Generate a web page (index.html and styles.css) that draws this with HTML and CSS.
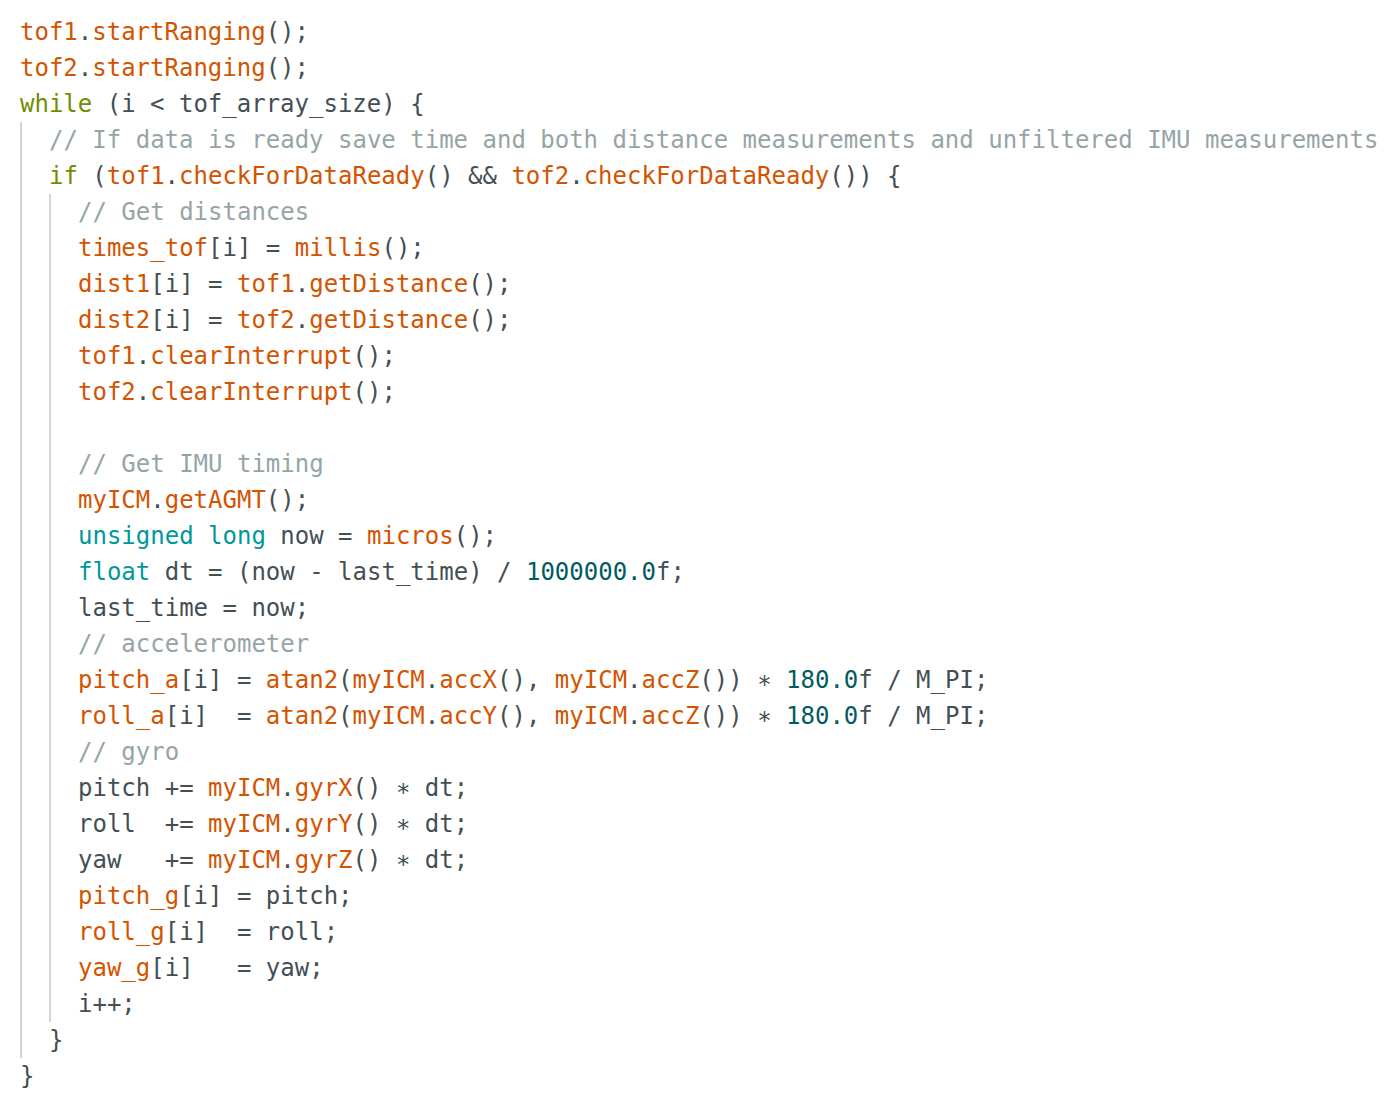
FILE: index.html
```html
<!DOCTYPE html>
<html>
<head>
<meta charset="utf-8">
<link rel="stylesheet" href="styles.css">
</head>
<body>
<div class="code">
<div class="ln"><span class="f">tof1</span>.<span class="f">startRanging</span>();</div>
<div class="ln"><span class="f">tof2</span>.<span class="f">startRanging</span>();</div>
<div class="ln"><span class="k">while</span> (i &lt; tof_array_size) {</div>
<div class="blk">
  <div class="ln"><span class="c">// If data is ready save time and both distance measurements and unfiltered IMU measurements</span></div>
  <div class="ln"><span class="k">if</span> (<span class="f">tof1</span>.<span class="f">checkForDataReady</span>() &amp;&amp; <span class="f">tof2</span>.<span class="f">checkForDataReady</span>()) {</div>
  <div class="blk">
    <div class="ln"><span class="c">// Get distances</span></div>
    <div class="ln"><span class="f">times_tof</span>[i] = <span class="f">millis</span>();</div>
    <div class="ln"><span class="f">dist1</span>[i] = <span class="f">tof1</span>.<span class="f">getDistance</span>();</div>
    <div class="ln"><span class="f">dist2</span>[i] = <span class="f">tof2</span>.<span class="f">getDistance</span>();</div>
    <div class="ln"><span class="f">tof1</span>.<span class="f">clearInterrupt</span>();</div>
    <div class="ln"><span class="f">tof2</span>.<span class="f">clearInterrupt</span>();</div>
    <div class="ln"> </div>
    <div class="ln"><span class="c">// Get IMU timing</span></div>
    <div class="ln"><span class="f">myICM</span>.<span class="f">getAGMT</span>();</div>
    <div class="ln"><span class="t">unsigned</span> <span class="t">long</span> now = <span class="f">micros</span>();</div>
    <div class="ln"><span class="t">float</span> dt = (now - last_time) / <span class="n">1000000.0</span>f;</div>
    <div class="ln">last_time = now;</div>
    <div class="ln"><span class="c">// accelerometer</span></div>
    <div class="ln"><span class="f">pitch_a</span>[i] = <span class="f">atan2</span>(<span class="f">myICM</span>.<span class="f">accX</span>(), <span class="f">myICM</span>.<span class="f">accZ</span>()) ∗ <span class="n">180.0</span>f / M_PI;</div>
    <div class="ln"><span class="f">roll_a</span>[i]  = <span class="f">atan2</span>(<span class="f">myICM</span>.<span class="f">accY</span>(), <span class="f">myICM</span>.<span class="f">accZ</span>()) ∗ <span class="n">180.0</span>f / M_PI;</div>
    <div class="ln"><span class="c">// gyro</span></div>
    <div class="ln">pitch += <span class="f">myICM</span>.<span class="f">gyrX</span>() ∗ dt;</div>
    <div class="ln">roll  += <span class="f">myICM</span>.<span class="f">gyrY</span>() ∗ dt;</div>
    <div class="ln">yaw   += <span class="f">myICM</span>.<span class="f">gyrZ</span>() ∗ dt;</div>
    <div class="ln"><span class="f">pitch_g</span>[i] = pitch;</div>
    <div class="ln"><span class="f">roll_g</span>[i]  = roll;</div>
    <div class="ln"><span class="f">yaw_g</span>[i]   = yaw;</div>
    <div class="ln">i++;</div>
  </div>
  <div class="ln">}</div>
</div>
<div class="ln">}</div>
</div>
</body>
</html>
```
FILE: styles.css
```css
html, body {
  margin: 0;
  padding: 0;
  background: #ffffff;
}
.code {
  padding: 14px 0 0 20px;
  font-family: "DejaVu Sans Mono", "Liberation Mono", monospace;
  font-size: 24px;
  color: #434f54;
}
.ln {
  height: 36px;
  line-height: 36px;
  white-space: pre;
}
.blk {
  border-left: 2px solid #d4d4d4;
  padding-left: 27px;
}
.f { color: #d35400; }
.k { color: #728e00; }
.t { color: #00979c; }
.c { color: #95a5a6; }
.n { color: #005c5f; }
```
